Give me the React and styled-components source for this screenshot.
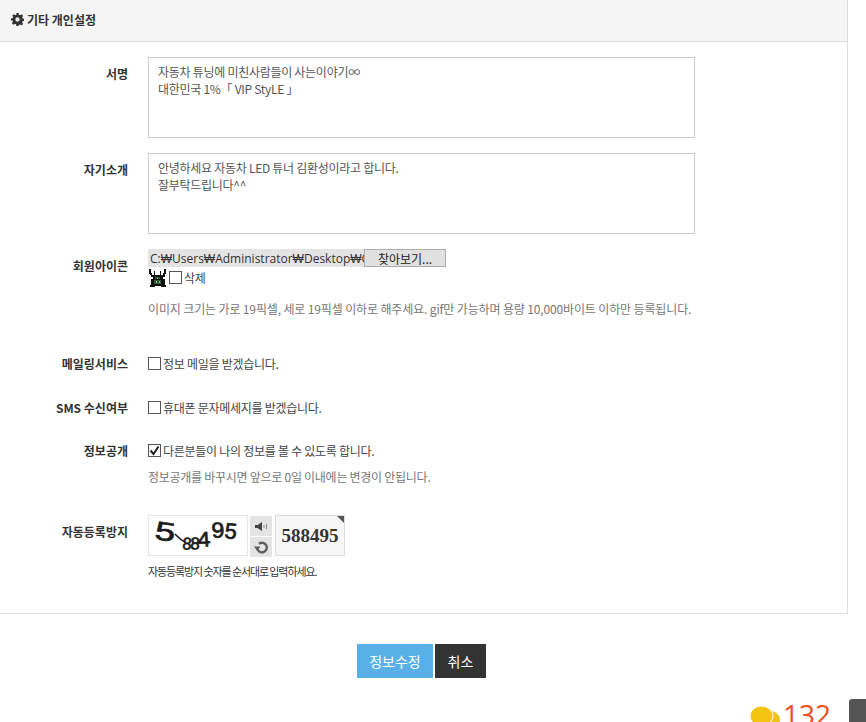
import React from 'react';
import styled, { createGlobalStyle } from 'styled-components';

const GlobalStyle = createGlobalStyle`
  html, body {
    margin: 0;
    padding: 0;
    height: 722px;
    overflow: hidden;
    background: #fff;
    font-family: "Noto Sans CJK KR", "Noto Sans", sans-serif;
    font-size: 12px;
    color: #333;
  }
  * { box-sizing: border-box; }
`;

const Page = styled.div`
  position: relative;
  width: 866px;
  height: 722px;
  overflow: hidden;
`;

const Panel = styled.section`
  width: 848px;
  height: 614px;
  border-right: 1px solid #ddd;
  border-bottom: 1px solid #ddd;
`;

const PanelHead = styled.h3`
  display: flex;
  align-items: center;
  gap: 3px;
  height: 42px;
  margin: 0;
  padding: 0 0 2px 11px;
  background: #f5f5f5;
  border-bottom: 1px solid #ddd;
  font-size: 12px;
  font-weight: 700;
  color: #333;
`;

const Form = styled.div`
  padding-top: 15px;
`;

const Row = styled.div`
  display: grid;
  grid-template-columns: 128px 1fr;
  column-gap: 20px;
  height: ${({ $h }) => $h}px;
  padding-top: ${({ $pad }) => $pad || 0}px;
`;

const Label = styled.div`
  text-align: right;
  font-weight: 700;
  font-size: 12px;
  line-height: 18px;
  padding-top: ${({ $top }) => $top || 0}px;
  color: #333;
`;

const Area = styled.div`
  width: 547px;
  height: 81px;
  padding: 5px 9px;
  border: 1px solid #ccc;
  font-size: 12px;
  line-height: 17px;
  letter-spacing: -0.28px;
  color: #555;
`;

const FileLine = styled.div`
  display: flex;
  height: 18px;
`;

const FilePath = styled.div`
  width: 216px;
  height: 18px;
  padding-left: 2px;
  background: #e4e4e4;
  overflow: hidden;
  white-space: nowrap;
  font-family: "Open Sans", sans-serif;
  font-size: 12px;
  line-height: 19px;
  color: #333;
`;

const BrowseButton = styled.button`
  width: 82px;
  height: 18px;
  padding: 0;
  background: #e1e1e1;
  border: 1px solid #adadad;
  font: inherit;
  font-size: 12px;
  line-height: 15px;
  color: #222;
`;

const CheckLine = styled.label`
  display: flex;
  align-items: center;
  height: 18px;
  margin-top: ${({ $top }) => $top || 0}px;
  font-size: 12px;
  letter-spacing: -0.27px;
  color: #444;
`;

const Box = styled.span`
  display: inline-flex;
  align-items: center;
  justify-content: center;
  width: 13px;
  height: 13px;
  margin: 0 2px 0 ${({ $left }) => $left || 0}px;
  border: 1px solid #555;
  background: #fff;
`;

const Help = styled.p`
  margin: ${({ $top }) => $top}px 0 0;
  font-size: 12px;
  line-height: 18px;
  letter-spacing: ${({ $ls }) => $ls}px;
  color: #777;
`;

const CaptchaLine = styled.div`
  display: flex;
  height: 43px;
`;

const CaptchaImage = styled.div`
  width: 100px;
  height: 41px;
  border: 1px solid #e6e6e6;
  background: #fff;
`;

const CaptchaTools = styled.div`
  display: flex;
  flex-direction: column;
  gap: 1px;
  margin: 1px 3px 0 2px;
`;

const CaptchaTool = styled.button`
  display: flex;
  align-items: center;
  justify-content: center;
  width: 22px;
  height: 20px;
  padding: 0;
  border: 0;
  background: #e4e4e4;
`;

const CaptchaInput = styled.div`
  position: relative;
  width: 70px;
  height: 41px;
  border: 1px solid #ddd;
  background: #f7f7f7;
  font-family: "Liberation Serif", serif;
  font-size: 19px;
  font-weight: 700;
  line-height: 39px;
  text-align: center;
  color: #333;
  &::after {
    content: '';
    position: absolute;
    top: 0;
    right: 0;
    border-top: 7px solid #555;
    border-left: 7px solid transparent;
  }
`;

const CaptchaNote = styled.p`
  margin: 5px 0 0;
  font-size: 11px;
  line-height: 16px;
  letter-spacing: -1.1px;
  color: #333;
`;

const Actions = styled.div`
  display: flex;
  justify-content: center;
  gap: 2px;
  width: 843px;
  margin-top: 30px;
`;

const Button = styled.button`
  height: 34px;
  width: ${({ $w }) => $w}px;
  padding: 0;
  border: 1px solid ${({ $dark }) => ($dark ? '#333' : '#5bb1e6')};
  background: ${({ $dark }) => ($dark ? '#333' : '#58b0e6')};
  color: #fff;
  font: inherit;
  font-size: 14px;
`;

const Counter = styled.div`
  position: absolute;
  left: 750px;
  top: 696px;
  display: flex;
  align-items: flex-start;
  gap: 3px;
  font-family: "Open Sans", sans-serif;
  font-size: 28px;
  line-height: 36px;
  color: #f04e23;
  svg {
    margin-top: 10px;
  }
`;

const TopTab = styled.div`
  position: absolute;
  left: 849px;
  top: 699px;
  width: 17px;
  height: 23px;
  border-radius: 3px 0 0 0;
  background: #555;
`;

const Gear = () => (
  <svg width="13" height="13" viewBox="0 0 24 24" fill="#333">
    <path fillRule="evenodd" d="M10 0h4l.7 3.3 2 .8L19.6 2.300l2.800 2.800-1.800 2.900.8 2 3.300.700v4l-3.300.7-.8 2 1.800 2.900-2.800 2.800-2.900-1.800-2 .8L14 24h-4l-.7-3.300-2-.8-2.900 1.800-2.800-2.800 1.800-2.900-.8-2L0 14v-4l3.300-.7.8-2L2.300 5.100l2.800-2.800 2.900 1.800 2-.8zM12 8a4 4 0 1 0 0 8 4 4 0 0 0 0-8z" />
  </svg>
);

const Beetle = () => (
  <svg width="19" height="19" viewBox="0 0 19 19" shapeRendering="crispEdges" style={{ display: 'block' }}>
    <path d="M1 1h2v4h1v2h2V3h1v4h5V3h1v4h2V5h1V1h2v5h-1v3h-2v2h2v6h1v2h-5v-1H7v1H2v-2h1v-6h2V9H3V7H2V6H1z" fill="#111" />
    <path d="M7 9h5v2H7zM6 12h7v4H6z" fill="#2e5a3a" />
    <path d="M8 13h1v2H8zM11 13h1v2h-1zM9 10h1v1H9z" fill="#8cc080" />
  </svg>
);

const CheckMark = () => (
  <svg width="11" height="11" viewBox="0 0 11 11">
    <path d="M1.500 5.500l3 3.500 5-7.500" fill="none" stroke="#222" strokeWidth="2" />
  </svg>
);

const Speaker = () => (
  <svg width="13" height="9" viewBox="0 0 13 9">
    <path d="M0 3h2.500L7 0v9L2.500 6H0z" fill="#444" />
    <path d="M8.500 3h1v3h-1zM11 2h1v5h-1z" fill="#8a8a8a" />
  </svg>
);

const Refresh = () => (
  <svg width="15" height="15" viewBox="0 0 14 14">
    <path d="M3 7a4.500 4.500 0 1 0 1.600-3.400" fill="none" stroke="#5c5c5c" strokeWidth="2.200" />
    <path d="M0 6h6L3 10z" fill="#5c5c5c" />
  </svg>
);

const CaptchaArt = () => (
  <svg width="98" height="39" viewBox="0 0 98 39">
    <g fontFamily="'Liberation Sans', sans-serif" fill="#1c1c1c" stroke="#1c1c1c" strokeWidth=".7">
      <text transform="translate(5 23) rotate(8) scale(1.4 1)" fontSize="26">5</text>
      <text transform="translate(33 33) rotate(6) scale(.95 1)" fontSize="17">8</text>
      <text transform="translate(41 33) rotate(4)" fontSize="17">8</text>
      <text transform="translate(49 31) rotate(-4) scale(1.1 1)" fontSize="21">4</text>
      <text transform="translate(63 22) rotate(-4) scale(1.05 1)" fontSize="22">9</text>
      <text transform="translate(75 22) rotate(6)" fontSize="22">5</text>
    </g>
    <path d="M26 18C29 21 31 24 36 26" fill="none" stroke="#1c1c1c" strokeWidth="1.600" />
  </svg>
);

const Coins = () => (
  <svg width="30" height="26" viewBox="0 0 30 26">
    <circle cx="21" cy="14" r="9" fill="#eec31a" />
    <ellipse cx="11.500" cy="10" rx="11.500" ry="10" fill="#f2c40f" stroke="#fff" strokeWidth="1" />
  </svg>
);

export default function App() {
  return (
    <Page>
      <GlobalStyle />
      <Panel>
        <PanelHead>
          <Gear />
          기타 개인설정
        </PanelHead>
        <Form>
          <Row $h={96}>
            <Label $top={8}>서명</Label>
            <Area>
              자동차 튜닝에 미친사람들이 사는이야기∞
              <br />
              대한민국 1%「 VIP StyLE 」
            </Area>
          </Row>
          <Row $h={96}>
            <Label $top={8}>자기소개</Label>
            <Area>
              안녕하세요 자동차 LED 튜너 김환성이라고 합니다.
              <br />
              잘부탁드립니다^^
            </Area>
          </Row>
          <Row $h={105}>
            <Label $top={8}>회원아이콘</Label>
            <div>
              <FileLine>
                <FilePath>C:₩Users₩Administrator₩Desktop₩Car</FilePath>
                <BrowseButton>찾아보기...</BrowseButton>
              </FileLine>
              <CheckLine $top={1}>
                <Beetle />
                <Box $left={2} />
                삭제
              </CheckLine>
              <Help $top={14} $ls={-0.14}>이미지 크기는 가로 19픽셀, 세로 19픽셀 이하로 해주세요. gif만 가능하며 용량 10,000바이트 이하만 등록됩니다.</Help>
            </div>
          </Row>
          <Row $h={44}>
            <Label $top={1}>메일링서비스</Label>
            <CheckLine>
              <Box />
              정보 메일을 받겠습니다.
            </CheckLine>
          </Row>
          <Row $h={43}>
            <Label $top={1}>SMS 수신여부</Label>
            <CheckLine>
              <Box />
              휴대폰 문자메세지를 받겠습니다.
            </CheckLine>
          </Row>
          <Row $h={65}>
            <Label $top={1}>정보공개</Label>
            <div>
              <CheckLine>
                <Box>
                  <CheckMark />
                </Box>
                다른분들이 나의 정보를 볼 수 있도록 합니다.
              </CheckLine>
              <Help $top={9} $ls={-0.27}>정보공개를 바꾸시면 앞으로 0일 이내에는 변경이 안됩니다.</Help>
            </div>
          </Row>
          <Row $h={79} $pad={9}>
            <Label $top={8}>자동등록방지</Label>
            <div>
              <CaptchaLine>
                <CaptchaImage>
                  <CaptchaArt />
                </CaptchaImage>
                <CaptchaTools>
                  <CaptchaTool>
                    <Speaker />
                  </CaptchaTool>
                  <CaptchaTool>
                    <Refresh />
                  </CaptchaTool>
                </CaptchaTools>
                <CaptchaInput>588495</CaptchaInput>
              </CaptchaLine>
              <CaptchaNote>자동등록방지 숫자를 순서대로 입력하세요.</CaptchaNote>
            </div>
          </Row>
        </Form>
      </Panel>
      <Actions>
        <Button $w={76}>정보수정</Button>
        <Button $w={51} $dark>취소</Button>
      </Actions>
      <Counter>
        <Coins />
        132
      </Counter>
      <TopTab />
    </Page>
  );
}
